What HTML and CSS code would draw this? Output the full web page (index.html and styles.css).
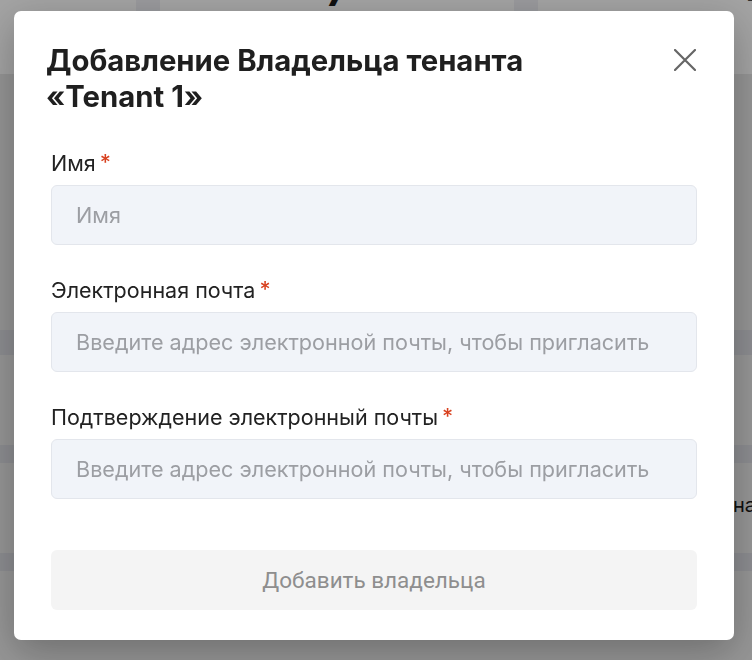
FILE: index.html
```html
<!DOCTYPE html>
<html lang="ru">
<head>
<meta charset="utf-8">
<title>Добавление Владельца тенанта</title>
<link rel="stylesheet" href="styles.css">
</head>
<body>
<div class="page">
  <div class="stats">
    <div class="stat stat-a"></div>
    <div class="stat stat-b"><span class="stat-num">7</span></div>
    <div class="stat stat-c"><span class="stat-num">4</span></div>
  </div>
  <div class="table">
    <div class="spacer s1"></div>
    <div class="band b1"></div>
    <div class="trow r1"></div>
    <div class="band b2"></div>
    <div class="trow r2"><span class="cell-text">на</span></div>
    <div class="band b3"></div>
    <div class="trow r3"></div>
  </div>
</div>

<div class="overlay">
  <div class="modal">
    <div class="modal-head">
      <h2 class="modal-title">Добавление Владельца тенанта «Tenant 1»</h2>
      <button class="close" aria-label="Закрыть">
        <svg width="22" height="22" viewBox="0 0 22 22"><path d="M1 1L21 21M21 1L1 21" stroke="#666" stroke-width="2.2" stroke-linecap="round" fill="none"/></svg>
      </button>
    </div>
    <form class="form">
      <div class="field">
        <label class="label">Имя<span class="req">*</span></label>
        <input class="input" type="text" placeholder="Имя">
      </div>
      <div class="field">
        <label class="label">Электронная почта<span class="req">*</span></label>
        <input class="input" type="text" placeholder="Введите адрес электронной почты, чтобы пригласить">
      </div>
      <div class="field">
        <label class="label">Подтверждение электронный почты<span class="req">*</span></label>
        <input class="input" type="text" placeholder="Введите адрес электронной почты, чтобы пригласить">
      </div>
      <button class="submit" type="button" disabled>Добавить владельца</button>
    </form>
  </div>
</div>
</body>
</html>
```

FILE: styles.css
```css
* { box-sizing: border-box; }
html, body { margin: 0; padding: 0; }
body {
  width: 752px;
  height: 660px;
  overflow: hidden;
  font-family: Inter, "Noto Sans", sans-serif;
  background: #e9e9e9;
}
.page { width: 752px; }
.stats {
  display: flex;
  height: 74px;
  background: #f0f1f6;
}
.stat { background: #ffffff; height: 74px; overflow: hidden; }
.stat-a { width: 136px; margin-right: 24px; }
.stat-b { width: 354px; margin-right: 24px; display: flex; justify-content: center; }
.stat-c { flex: 1; padding-left: 208px; }
.stat-num {
  display: block;
  font-size: 40px;
  font-weight: 700;
  line-height: 40px;
  margin-top: -28px;
  color: #1a1a1a;
}
.table { width: 752px; }
.spacer.s1 { height: 256px; }
.band { background: #dcdde3; }
.b1 { height: 25px; }
.b2 { height: 18px; }
.b3 { height: 18px; }
.trow { background: #ebebeb; }
.r1 { height: 90px; }
.r2 { height: 90px; padding-left: 733px; padding-top: 30px; }
.r3 { height: 120px; }
.cell-text { font-size: 20px; color: #1a1a1a; white-space: nowrap; line-height: 24px; }

.overlay {
  position: fixed;
  inset: 0;
  background: rgba(0, 0, 0, 0.36);
  padding: 11px 0 0 14px;
}
.modal {
  width: 720px;
  height: 629px;
  background: #ffffff;
  border-radius: 7px;
  box-shadow: 0 12px 40px rgba(0, 0, 0, 0.28);
  padding: 32px 32px 31px 32px;
}
.modal-head {
  display: flex;
  justify-content: space-between;
  align-items: flex-start;
}
.modal-title {
  margin: 0;
  width: 540px;
  font-size: 29.3px;
  line-height: 36px;
  font-weight: 700;
  color: #1f1f1f;
}
.close {
  border: 0;
  background: transparent;
  padding: 0;
  margin: 6px 6px 0 0;
  width: 22px;
  height: 22px;
  display: flex;
}
.form {
  display: flex;
  flex-direction: column;
  padding: 34px 5px 0 5px;
}
.field {
  display: flex;
  flex-direction: column;
  margin-bottom: 31px;
}
.label {
  font-size: 21.5px;
  line-height: 28px;
  color: #222222;
  margin-bottom: 8px;
}
.req {
  color: #d8411f;
  margin-left: 4px;
  font-weight: 500;
  position: relative;
  top: -1px;
}
.input {
  height: 60px;
  width: 100%;
  border: 1px solid #e3e6ec;
  border-radius: 6px;
  background: #f1f4f9;
  padding: 0 24px;
  font-family: Inter, "Noto Sans", sans-serif;
  font-size: 21.6px;
  color: #222;
  outline: none;
}
.input::placeholder { color: #9c9ea3; }
.submit {
  margin-top: 20px;
  height: 60px;
  width: 100%;
  border: 0;
  border-radius: 6px;
  background: #f4f4f4;
  color: #8e8e8e;
  font-family: Roboto, "Liberation Sans", sans-serif;
  font-size: 22.5px;
}
```
